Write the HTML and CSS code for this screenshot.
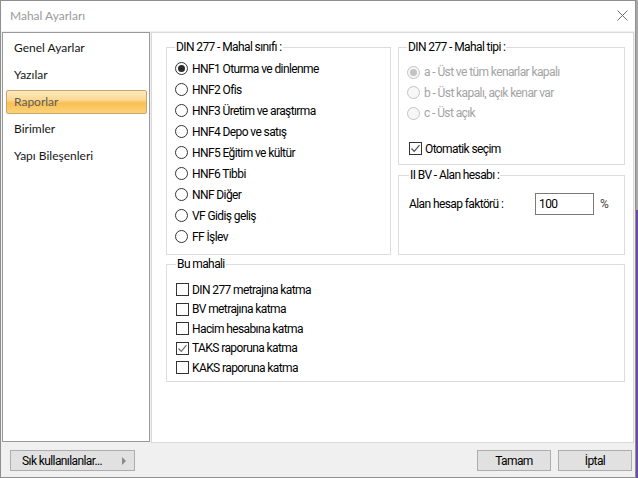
FILE: index.html
```html
<!DOCTYPE html>
<html lang="tr">
<head>
  <meta charset="UTF-8" />
  <title>Mahal Ayarları</title>
  <link rel="stylesheet" href="styles.css">
</head>
<body>
  <div class="window">
    <div class="titlebar">
      <span class="title">Mahal Ayarları</span>
      <svg class="close" width="11" height="11" viewBox="0 0 11 11">
        <path d="M0.5 0.5 L10.5 10.5 M10.5 0.5 L0.5 10.5" stroke="#6f6f6f" stroke-width="1" fill="none" />
      </svg>
    </div>

    <div class="main">
      <ul class="nav">
        <li class="nav-item">Genel Ayarlar</li>
        <li class="nav-item">Yazılar</li>
        <li class="nav-item active">Raporlar</li>
        <li class="nav-item">Birimler</li>
        <li class="nav-item">Yapı Bileşenleri</li>
      </ul>

      <div class="panel">
        <div class="top-row">
          <fieldset class="group group-class">
            <legend>DIN 277 - Mahal sınıfı :</legend>
            <label class="opt"><span class="radio checked"></span>HNF1 Oturma ve dinlenme</label>
            <label class="opt"><span class="radio"></span>HNF2 Ofis</label>
            <label class="opt"><span class="radio"></span>HNF3 Üretim ve araştırma</label>
            <label class="opt"><span class="radio"></span>HNF4 Depo ve satış</label>
            <label class="opt"><span class="radio"></span>HNF5 Eğitim ve kültür</label>
            <label class="opt"><span class="radio"></span>HNF6 Tibbi</label>
            <label class="opt"><span class="radio"></span>NNF Diğer</label>
            <label class="opt"><span class="radio"></span>VF Gidiş geliş</label>
            <label class="opt"><span class="radio"></span>FF İşlev</label>
          </fieldset>

          <div class="side">
            <fieldset class="group group-type">
              <legend>DIN 277 - Mahal tipi :</legend>
              <label class="opt-sm disabled"><span class="radio checked"></span>a - Üst ve tüm kenarlar kapalı</label>
              <label class="opt-sm disabled"><span class="radio"></span>b - Üst kapalı, açık kenar var</label>
              <label class="opt-sm disabled"><span class="radio"></span>c - Üst açık</label>
              <label class="check auto">
                <span class="box"><svg width="11" height="11" viewBox="0 0 11 11"><path d="M1.5 5.5 L4.2 8.3 L9.5 2.2" stroke="#4a4a4a" stroke-width="1.2" fill="none" /></svg></span>Otomatik seçim
              </label>
            </fieldset>

            <fieldset class="group group-area">
              <legend>II BV - Alan hesabı :</legend>
              <div class="field">
                <span class="field-label">Alan hesap faktörü :</span>
                <span class="input">100</span>
                <span class="unit">%</span>
              </div>
            </fieldset>
          </div>
        </div>

        <fieldset class="group group-this">
          <legend>Bu mahali</legend>
          <label class="check"><span class="box"></span>DIN 277 metrajına katma</label>
          <label class="check"><span class="box"></span>BV metrajına katma</label>
          <label class="check"><span class="box"></span>Hacim hesabına katma</label>
          <label class="check">
            <span class="box"><svg width="11" height="11" viewBox="0 0 11 11"><path d="M1.5 5.5 L4.2 8.3 L9.5 2.2" stroke="#6a6a6a" stroke-width="1.2" fill="none" /></svg></span>TAKS raporuna katma
          </label>
          <label class="check"><span class="box"></span>KAKS raporuna katma</label>
        </fieldset>
      </div>
    </div>

    <div class="footer">
      <button class="btn btn-fav">Sık kullanılanlar...<span class="arrow"></span></button>
      <div class="actions">
        <button class="btn">Tamam</button>
        <button class="btn">İptal</button>
      </div>
    </div>
  </div>
</body>
</html>
```

FILE: styles.css
```css
:root {
  --ui-font: Lato, "Open Sans", sans-serif;
  --narrow-font: Roboto, "Liberation Sans", sans-serif;
  --frame-color: #8f8f8f;
  --group-border: #dcdcdc;
  --disabled-color: #a3a3a3;
}

* {
  box-sizing: border-box;
  margin: 0;
  padding: 0;
}

html, body {
  width: 638px;
  height: 478px;
  overflow: hidden;
}

body {
  background: linear-gradient(#a9a9a9 0 210px, #6b4ea3 210px);
  font-family: var(--narrow-font);
  font-size: 12px;
  letter-spacing: -0.6px;
  color: #000;
}

.window {
  width: 636px;
  height: 478px;
  border: 1px solid var(--frame-color);
  background-color: #f0f0f0;
  display: flex;
  flex-direction: column;
}

/* Barra de título */
.titlebar {
  height: 30px;
  background-color: #fff;
  display: flex;
  align-items: center;
  justify-content: space-between;
  padding: 0 7px 1px 9px;
}

.title {
  font-family: var(--ui-font);
  font-size: 12px;
  letter-spacing: 0;
  color: #9a9a9a;
}

.main {
  display: flex;
  align-items: flex-start;
  gap: 1px;
  padding: 1px 1px 0 1px;
}

/* Menú lateral */
.nav {
  list-style: none;
  width: 148px;
  height: 410px;
  background-color: #fff;
  border: 1px solid #9a9a9a;
  padding: 3px 2px 0 3px;
  display: flex;
  flex-direction: column;
  gap: 3px;
}

.nav-item {
  height: 24px;
  line-height: 22px;
  padding-left: 7px;
  border: 1px solid transparent;
  font-family: var(--ui-font);
  font-size: 12px;
  letter-spacing: 0;
  color: #161616;
}

.nav-item.active {
  color: #5c5c5c;
  border-color: #c9a66a;
  border-radius: 2px;
  background: linear-gradient(#fde9bd 0%, #fcd995 40%, #f9bf52 55%, #fbd27a 100%);
}

/* Panel principal */
.panel {
  width: 483px;
  height: 411px;
  background-color: #fff;
  border: 1px solid #d9d9d9;
  padding: 7px 0 0 14px;
}

.top-row {
  display: flex;
  gap: 7px;
}

.side {
  display: flex;
  flex-direction: column;
  gap: 3px;
}

.group {
  border: 1px solid var(--group-border);
  min-width: 0;
  padding: 0 0 0 8px;
}

.group legend {
  padding: 0 1px;
  line-height: 14px;
}

.group-class {
  width: 225px;
  height: 215px;
  padding-top: 4px;
}

.group-type {
  width: 227px;
  height: 125px;
  padding-top: 8px;
}

.group-area {
  width: 227px;
  height: 87px;
  padding: 11px 0 0 10px;
}

.group-this {
  width: 459px;
  height: 125px;
  margin-top: 2px;
  padding: 9px 0 0 9px;
}

.opt, .opt-sm, .check {
  display: flex;
  align-items: center;
  white-space: nowrap;
}

.opt {
  height: 21px;
}

.opt-sm {
  height: 20.5px;
}

.disabled {
  color: var(--disabled-color);
}

.radio {
  width: 13px;
  height: 13px;
  border: 1px solid #333;
  border-radius: 50%;
  margin-right: 4px;
  display: flex;
  align-items: center;
  justify-content: center;
  flex-shrink: 0;
}

.radio.checked::after {
  content: "";
  width: 7px;
  height: 7px;
  border-radius: 50%;
  background-color: #2b2b2b;
}

.disabled .radio {
  border-color: #c3c3c3;
  background-color: #f7f7f7;
}

.disabled .radio.checked::after {
  background-color: #c3c3c3;
}

.check {
  height: 19.5px;
}

.check.auto {
  height: 20px;
  margin-top: 15px;
  margin-left: 2px;
}

.box {
  width: 13px;
  height: 13px;
  border: 1px solid #333;
  margin-right: 3px;
  flex-shrink: 0;
  display: flex;
}

/* Campo de factor */
.field {
  display: flex;
  align-items: center;
  height: 22px;
}

.field-label {
  width: 126px;
}

.input {
  width: 59px;
  height: 22px;
  border: 1px solid #7a7a7a;
  padding-left: 3px;
  line-height: 20px;
}

.unit {
  margin-left: 6px;
  color: #444;
}

/* Pie con botones */
.footer {
  flex: 1;
  display: flex;
  justify-content: space-between;
  align-items: flex-start;
  padding: 7px 3px 0 9px;
}

.actions {
  display: flex;
  gap: 7px;
}

.btn {
  width: 74px;
  height: 21px;
  background-color: #e1e1e1;
  border: 1px solid #adadad;
  font-family: var(--narrow-font);
  font-size: 12px;
  letter-spacing: -0.6px;
  color: #000;
  white-space: nowrap;
}

.btn-fav {
  width: 125px;
  display: flex;
  align-items: center;
  padding-left: 11px;
}

.arrow {
  margin-left: auto;
  margin-right: 8px;
  width: 0;
  height: 0;
  border-top: 4px solid transparent;
  border-bottom: 4px solid transparent;
  border-left: 4px solid #8a8a8a;
}
```
